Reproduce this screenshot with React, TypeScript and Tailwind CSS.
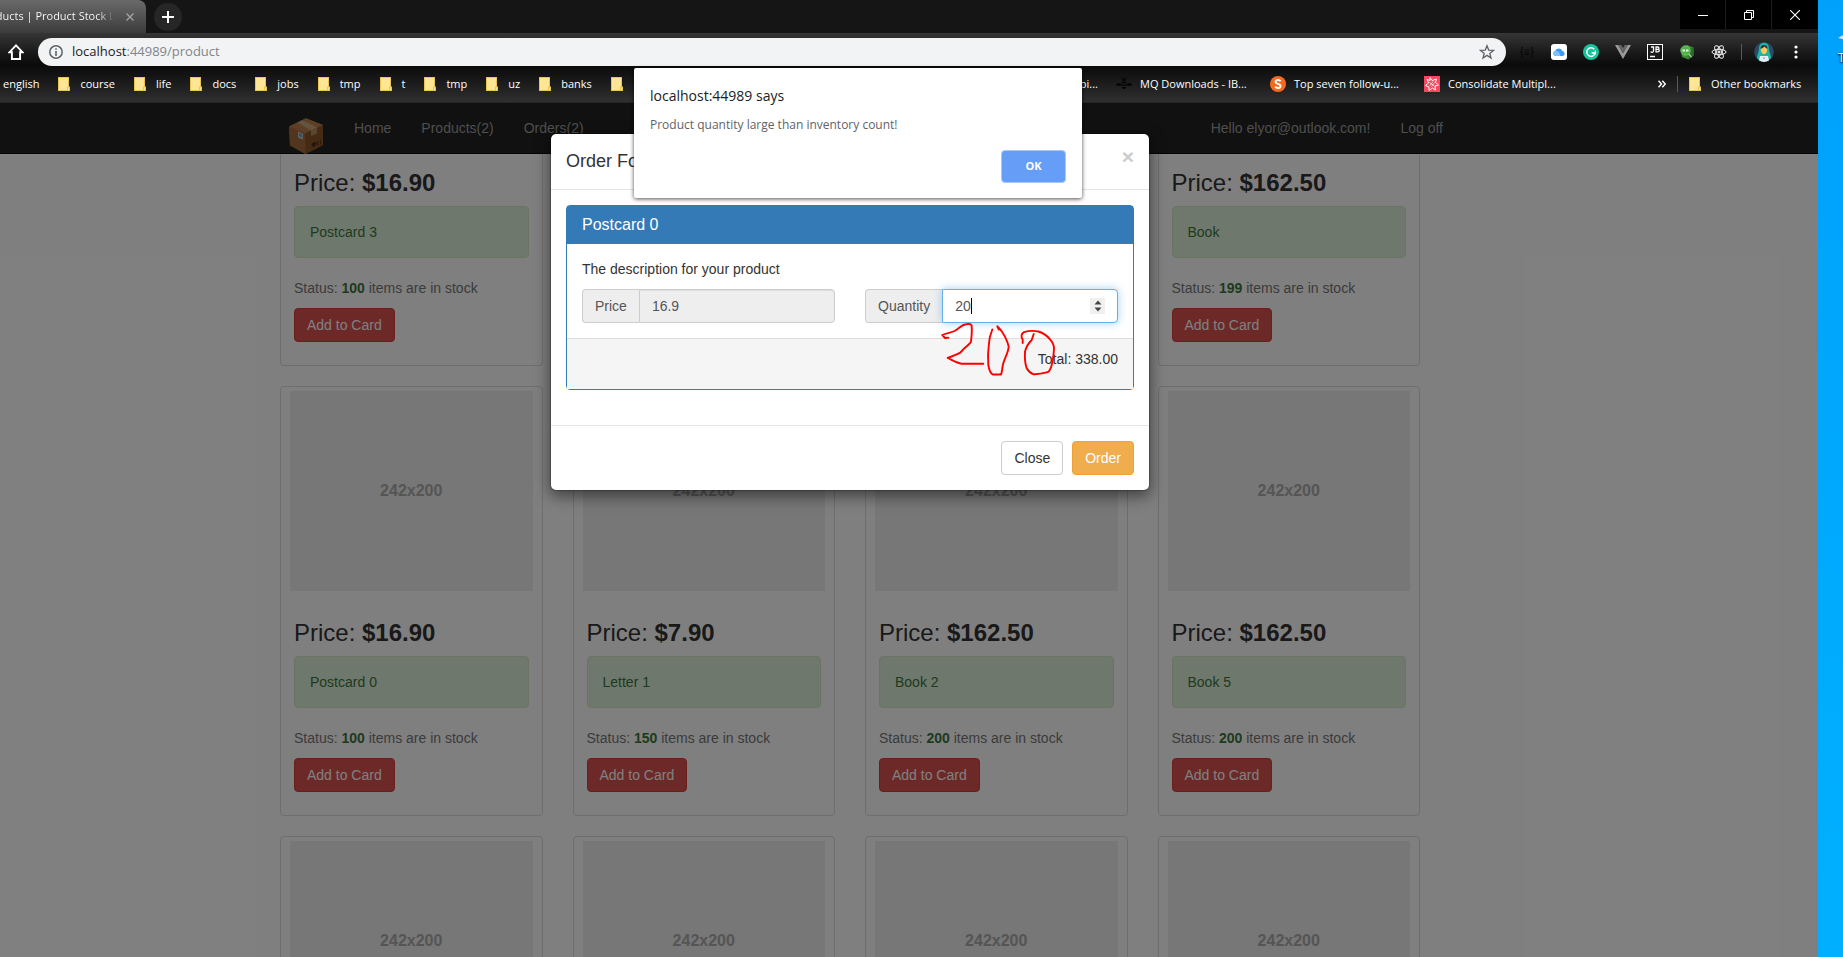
import type { ReactNode } from "react";

type Product = { price: string; name: string; stock: number };

const bookmarkFolders = ["course", "life", "docs", "jobs", "tmp", "t", "tmp", "uz", "banks"];

const products: Product[] = [
  { price: "$16.90", name: "Postcard 0", stock: 100 },
  { price: "$7.90", name: "Letter 1", stock: 150 },
  { price: "$162.50", name: "Book 2", stock: 200 },
  { price: "$162.50", name: "Book 5", stock: 200 },
];

function FolderIcon() {
  return (
    <svg width="12" height="14" viewBox="0 0 12 14" className="shrink-0" aria-hidden="true">
      <path d="M0 0h11v9.5h1V14H0z" fill="#e8c54f" />
      <path d="M1 1h9v8.500H9V13H1z" fill="#ffe695" />
      <path d="M10 10.500h1V13h-1z" fill="#ffe695" />
    </svg>
  );
}

function FolderBookmark({ children }: { children: ReactNode }) {
  return (
    <a href="#bookmark" className="flex shrink-0 items-center gap-[10px] whitespace-nowrap">
      <FolderIcon />
      {children}
    </a>
  );
}

function SiteBookmark({ icon, children }: { icon: ReactNode; children: ReactNode }) {
  return (
    <a href="#bookmark" className="flex shrink-0 items-center gap-2 whitespace-nowrap">
      {icon}
      <span className="w-28">{children}</span>
    </a>
  );
}

function BeeIcon() {
  return (
    <svg width="16" height="16" viewBox="0 0 16 16" aria-hidden="true" fill="#070707">
      <circle cx="8" cy="4" r="1.800" />
      <path d="M7 3 5 1.500M9 3l2-1.500" stroke="#070707" />
      <path d="M5.500 6h5v1.500h-5zM5 8.500h6V10H5zM5.500 11h5L9 13H7z" />
      <ellipse cx="2.600" cy="8.500" rx="2.600" ry="1.600" />
      <ellipse cx="13.400" cy="8.500" rx="2.600" ry="1.600" />
    </svg>
  );
}

function TopSevenIcon() {
  return (
    <svg width="16" height="16" viewBox="0 0 16 16" aria-hidden="true">
      <circle cx="8" cy="8" r="8" fill="#f96a1f" />
      <path
        d="M10.600 5.200C9.800 4.300 8.900 4 8 4 6.600 4 5.600 4.700 5.600 5.900c0 2.500 4.900 1.500 4.900 4.100 0 1.300-1.100 2-2.500 2-1.100 0-2.100-.4-2.800-1.300"
        fill="none"
        stroke="#fff"
        strokeWidth="2"
      />
    </svg>
  );
}

function StarBurstIcon() {
  return (
    <svg width="16" height="16" viewBox="0 0 16 16" aria-hidden="true">
      <rect width="16" height="16" fill="#f8485e" />
      <path
        d="M6 1.500 8 4.500l4.500-1.500L11.500 6.500l3 2.500-3.500 1 .5 4L8.500 12 5 14.500 5 11 1.500 9.500 4.500 7 3 3.500 6 4.500z"
        fill="none"
        stroke="#fff"
      />
      <path d="m6 9.500 3-4M7.500 10.500l3-4M5.500 6.500l5 3.500" stroke="#fff" strokeWidth=".7" />
    </svg>
  );
}

function HomeIcon() {
  return (
    <svg width="16" height="16" viewBox="0 0 16 16" aria-hidden="true">
      <path d="M8 1.400 1.600 8.200h2.300v6.800h8.200V8.200h2.300z" fill="none" stroke="#fff" strokeWidth="1.900" />
    </svg>
  );
}

function InfoIcon() {
  return (
    <svg width="14" height="14" viewBox="0 0 14 14" aria-hidden="true">
      <circle cx="7" cy="7" r="6.200" fill="none" stroke="#5f6368" strokeWidth="1.500" />
      <path d="M6.200 3.200h1.600v1.600H6.200zM6.200 6h1.600v5H6.200z" fill="#5f6368" />
    </svg>
  );
}

function StarIcon() {
  return (
    <svg width="16" height="16" viewBox="0 0 16 16" aria-hidden="true">
      <path
        d="m8 1.700 1.700 4.400 4.700.3-3.600 3 1.200 4.600L8 11.400 4 14l1.200-4.600-3.600-3 4.700-.3z"
        fill="none"
        stroke="#5f6368"
        strokeWidth="1.300"
      />
    </svg>
  );
}

function BracesIcon() {
  return (
    <svg width="16" height="16" viewBox="0 0 16 16" fill="none" stroke="#090909" strokeWidth="1.100" aria-hidden="true">
      <path d="M4 3.500H3v3.500L1.500 8.200 3 9.400v3.500h1M12 3.500h1v3.500l1.500 1.200L13 9.400v3.500h-1M5.500 6h5M5.500 8.200h5M5.500 10.400h5" />
    </svg>
  );
}

function CloudIcon() {
  return (
    <svg width="16" height="16" viewBox="0 0 16 16" aria-hidden="true">
      <rect width="16" height="16" rx="3" fill="#fff" />
      <path d="M4.500 12A2.500 2.500 0 0 1 4 7.100 4 4 0 0 1 11.400 7 2.600 2.600 0 0 1 12 12z" fill="#3f9bf7" />
      <path d="M4.500 12A2.500 2.500 0 0 1 4 7.100c2-.4 3.600.4 4.500 2.200.5 1.200.6 2 .5 2.700z" fill="#7cc4fb" />
    </svg>
  );
}

function GrammarIcon() {
  return (
    <svg width="16" height="16" viewBox="0 0 16 16" aria-hidden="true">
      <circle cx="8" cy="8" r="8" fill="#15c39a" />
      <path d="M11.300 5.200A4.300 4.300 0 1 0 12.300 9H8.600" fill="none" stroke="#fff" strokeWidth="1.500" />
      <path d="M12.300 6.500v2.700H9.800" fill="none" stroke="#fff" strokeWidth="1.200" />
    </svg>
  );
}

function VueIcon() {
  return (
    <svg width="16" height="16" viewBox="0 0 16 16" aria-hidden="true">
      <path d="M0 1h3.300L8 9.200 12.700 1H16L8 15z" fill="#9a9a9a" />
      <path d="M3.300 1h3L8 4l1.700-3h3L8 9.200z" fill="#666" />
    </svg>
  );
}

function BrainsIcon() {
  return (
    <svg width="16" height="16" viewBox="0 0 16 16" aria-hidden="true">
      <rect x=".5" y=".5" width="15" height="15" fill="#1b1b1b" stroke="#fff" />
      <path
        d="M4 3h2.500v3.800c0 1-.6 1.500-1.400 1.500-.6 0-1.100-.2-1.500-.7M9 2.500v5.800M8.500 3h2.300c1.500 0 1.500 2.300 0 2.300H9h2c1.700 0 1.700 2.500 0 2.500H8.500M3 12.500h5"
        fill="none"
        stroke="#fff"
        strokeWidth="1.300"
      />
    </svg>
  );
}

function HexIcon() {
  return (
    <svg width="16" height="16" viewBox="0 0 16 16" aria-hidden="true">
      <path d="M8 1 14.500 3.500v8L9.500 15.500 3 13 1.500 5z" fill="#3b8a34" />
      <path d="M10.500 4.500 14.500 3.500v8l-5 4z" fill="#2c6f2a" />
      <circle cx="6.500" cy="6.500" r="4.700" fill="#4fb548" stroke="#7cc675" strokeWidth=".8" />
      <path d="M3.500 6.500h2.500M7 6.500h2.500" stroke="#e3f7e0" strokeWidth="1.800" />
      <path d="m9.800 10 2.700 3.200" stroke="#c4c4c4" strokeWidth="1.200" />
    </svg>
  );
}

function AtomIcon() {
  return (
    <svg width="16" height="16" viewBox="0 0 16 16" fill="none" stroke="#f1f1f1" strokeWidth="1" aria-hidden="true">
      <ellipse cx="8" cy="8" rx="7" ry="2.700" />
      <ellipse cx="8" cy="8" rx="7" ry="2.700" transform="rotate(60 8 8)" />
      <ellipse cx="8" cy="8" rx="7" ry="2.700" transform="rotate(120 8 8)" />
      <circle cx="8" cy="8" r="1.100" fill="#f1f1f1" />
    </svg>
  );
}

function AvatarIcon() {
  return (
    <svg width="20" height="20" viewBox="0 0 20 20" aria-hidden="true">
      <circle cx="10" cy="10" r="9.800" fill="#2b4a63" />
      <path d="M10 .8c3.600 0 5 2.600 5 6.200 0 2.500 1.700 5 2 9-4 4.500-10.500 4.500-14 0 .3-4 2-6.500 2-9 0-3.600 1.400-6.200 5-6.200z" fill="#1fb5a4" />
      <path d="M10 3.500c2.300 0 3.200 1.600 3.200 4 0 2.700-1.300 4.700-3.200 4.700s-3.200-2-3.200-4.700c0-2.400.9-4 3.200-4z" fill="#fdc75b" />
      <path d="M6.600 7c0-3 1-4 3.400-4s3.400 1 3.400 4C12 6.200 11 5.300 10.500 4.500 9.500 5.800 8 6.500 6.600 7z" fill="#26323c" />
      <path d="M6 14h8l1 4.500a10 10 0 0 1-10 0z" fill="#e6eef2" />
      <circle cx="10" cy="16.300" r="1" fill="#9db3bf" />
    </svg>
  );
}

function BoxIcon() {
  return (
    <svg width="34" height="36" viewBox="0 0 34 36" aria-hidden="true">
      <path d="M0 8.500 17 .3 34 7v20L16.500 36 1 27.500z" fill="#a86d3c" />
      <path d="M0 8.500 17 .3 34 7 16 15.500z" fill="#b97f4c" />
      <path d="M0 8.500 16 15.500 16.500 36 1 27.500z" fill="#a56a3a" />
      <path d="M16 15.500 34 7v20l-17.500 9z" fill="#8a5429" />
      <path d="m8.500 4.600 5-2.400L28 9.500l-6 3z" fill="#c9a67f" />
      <path d="m22 12.500 6-3v6l-6 2.500z" fill="#b38c63" />
      <path d="m9 13.500 5 2.200v6L9 19.500z" fill="#b7c4ca" />
      <path d="m10 15 3 1.300v3L10 18z" fill="#7f9bad" />
      <path d="m23 25.500 4-1.500v2l-2 3-2-1.500zM29 22.500v5M31.500 21.500v5" fill="#4d2d12" stroke="#4d2d12" strokeWidth=".8" />
    </svg>
  );
}

function BrowserChrome() {
  return (
    <header className="shrink-0 font-['Open_Sans',sans-serif] text-[11px] text-white">
      <div className="flex h-[33px] bg-[#151515]">
        <div className="flex w-[248px] items-center gap-3 rounded-tr-lg bg-linear-to-b from-[#6a6a6a] to-[#3c3c3c] pl-20">
          <span className="w-[136px] overflow-hidden bg-linear-to-r from-white from-88% to-transparent bg-clip-text whitespace-nowrap text-transparent">
            Products | Product Stock List
          </span>
          <button type="button" aria-label="Close tab" className="text-[#a5a5a5]">
            <svg width="8" height="8" viewBox="0 0 8 8" aria-hidden="true">
              <path d="m.5.5 7 7m0-7-7 7" stroke="currentColor" strokeWidth="1.300" />
            </svg>
          </button>
        </div>
        <button
          type="button"
          aria-label="New tab"
          className="mt-[3px] ml-2 flex size-7 items-center justify-center rounded-full bg-[#262626]"
        >
          <svg width="12" height="12" viewBox="0 0 12 12" aria-hidden="true">
            <path d="M6 0v12M0 6h12" stroke="#fff" strokeWidth="2" />
          </svg>
        </button>
        <div className="ml-auto flex h-[29px] divide-x divide-[#1c1c1c] bg-black">
          <button type="button" aria-label="Minimize" className="flex w-[46px] items-center justify-center">
            <svg width="10" height="10" viewBox="0 0 10 10" aria-hidden="true">
              <path d="M0 5.500h10" stroke="#fff" />
            </svg>
          </button>
          <button type="button" aria-label="Restore" className="flex w-[46px] items-center justify-center">
            <svg width="10" height="10" viewBox="0 0 10 10" fill="none" stroke="#fff" aria-hidden="true">
              <path d="M.5 2.500h7v7h-7zM2.500 2.500v-2h7v7h-2" />
            </svg>
          </button>
          <button type="button" aria-label="Close" className="flex w-[46px] items-center justify-center">
            <svg width="10" height="10" viewBox="0 0 10 10" aria-hidden="true">
              <path d="m0 0 10 10M10 0 0 10" stroke="#fff" strokeWidth="1.100" />
            </svg>
          </button>
        </div>
      </div>

      <div className="flex h-[33px] items-center bg-linear-to-b from-[#363636] to-[#090909] pt-[5px] pl-[110px]">
        <button type="button" aria-label="Home page">
          <HomeIcon />
        </button>
        <div className="ml-[14px] flex h-7 flex-1 items-center rounded-full bg-[#f1f3f4] px-[11px]">
          <InfoIcon />
          <span className="flex-1 pl-[9px] text-[13px] text-[#80868b]">
            <span className="text-[#202124]">localhost</span>:44989/product
          </span>
          <button type="button" aria-label="Bookmark this page">
            <StarIcon />
          </button>
        </div>
        <div className="flex items-center gap-4 pl-[13px]">
          <BracesIcon />
          <CloudIcon />
          <GrammarIcon />
          <VueIcon />
          <BrainsIcon />
          <HexIcon />
          <AtomIcon />
        </div>
        <span className="ml-[14px] h-4 w-px bg-[#5a5a5a]" />
        <div className="ml-3">
          <AvatarIcon />
        </div>
        <button type="button" aria-label="Menu" className="px-5">
          <svg width="4" height="14" viewBox="0 0 4 14" fill="#fff" aria-hidden="true">
            <circle cx="2" cy="2" r="1.600" />
            <circle cx="2" cy="7" r="1.600" />
            <circle cx="2" cy="12" r="1.600" />
          </svg>
        </button>
      </div>

      <nav className="flex h-[37px] items-center gap-[11px] border-b border-[#252525] bg-linear-to-b from-[#0b0b0b] to-[#303030] pr-3 pl-[105px]">
        <div className="flex items-center gap-[19px]">
          <a href="#bookmark">english</a>
          {bookmarkFolders.map((name, i) => (
            <FolderBookmark key={i}>{name}</FolderBookmark>
          ))}
          <FolderIcon />
        </div>
        <div className="ml-auto flex items-center gap-[18px]">
          <a href="#bookmark">Mobi...</a>
          <SiteBookmark icon={<BeeIcon />}>MQ Downloads - IB...</SiteBookmark>
          <SiteBookmark icon={<TopSevenIcon />}>Top seven follow-u...</SiteBookmark>
          <SiteBookmark icon={<StarBurstIcon />}>Consolidate Multipl...</SiteBookmark>
        </div>
        <button type="button" aria-label="More bookmarks" className="ml-[87px]">
          <svg width="8" height="8" viewBox="0 0 8 8" fill="none" stroke="#fff" strokeWidth="1.500" aria-hidden="true">
            <path d="m.5.8 3 3.200-3 3.200M4.300.8l3 3.200-3 3.200" />
          </svg>
        </button>
        <div className="flex w-[129px] items-center gap-[11px]">
          <span className="h-4 w-px bg-[#5a5a5a]" />
          <FolderBookmark>Other bookmarks</FolderBookmark>
        </div>
      </nav>
    </header>
  );
}

function Placeholder() {
  return (
    <div className="mx-[9px] mt-1 flex h-[200px] items-center justify-center bg-[#eee] text-base font-bold text-[#aaa]">
      242x200
    </div>
  );
}

function Caption({ price, name, stock }: Product) {
  return (
    <div className="px-[13px] pb-[23px]">
      <h3 className="mb-[10px] text-2xl leading-[26px]">
        Price: <b>{price}</b>
      </h3>
      <div className="mb-5 rounded-sm border border-[#d6e9c6] bg-[#dff0d8] p-[15px] text-[#3c763d]">{name}</div>
      <p className="mb-[10px] text-[#777]">
        Status: <b className="text-[#3c763d]">{stock}</b> items are in stock
      </p>
      <button type="button" className="rounded-sm border border-[#d43f3a] bg-[#d9534f] px-3 py-[6px] text-white">
        Add to Card
      </button>
    </div>
  );
}

function Page() {
  return (
    <>
      <nav className="h-[51px] shrink-0 border-b border-[#080808] bg-[#222] text-[#9d9d9d]">
        <div className="mx-auto flex w-[1138px] items-start pt-[15px]">
          <a href="#brand" aria-label="Product Stock" className="h-9 shrink-0">
            <BoxIcon />
          </a>
          <div className="flex pl-4">
            <a href="#home" className="px-[15px]">Home</a>
            <a href="#products" className="px-[15px]">Products(2)</a>
            <a href="#orders" className="px-[15px]">Orders(2)</a>
          </div>
          <div className="-mr-[31px] ml-auto flex">
            <a href="#account" className="px-[15px]">Hello elyor@outlook.com!</a>
            <a href="#logoff" className="px-[15px]">Log off</a>
          </div>
        </div>
      </nav>
      <main className="pr-4">
        <div className="mx-auto grid w-[1140px] grid-cols-4 gap-x-[30px] gap-y-5">
          <article className="rounded-b-sm border border-t-0 border-[#ddd] pt-4">
            <Caption price="$16.90" name="Postcard 3" stock={100} />
          </article>
          <article className="col-start-4 rounded-b-sm border border-t-0 border-[#ddd] pt-4">
            <Caption price="$162.50" name="Book" stock={199} />
          </article>
          {products.map((product) => (
            <article key={product.name} className="rounded-sm border border-[#ddd]">
              <Placeholder />
              <div className="pt-[29px]">
                <Caption {...product} />
              </div>
            </article>
          ))}
          {products.map((product) => (
            <article key={product.name} className="rounded-sm border border-[#ddd]">
              <Placeholder />
            </article>
          ))}
        </div>
      </main>
    </>
  );
}

function OrderModal() {
  return (
    <section
      role="dialog"
      aria-label="Order Form"
      className="w-[600px] rounded-md border border-black/20 bg-white bg-clip-padding shadow-[0_5px_15px_rgba(0,0,0,0.5)]"
    >
      <header className="flex items-start justify-between border-b border-[#e5e5e5] p-[15px]">
        <h4 className="text-lg leading-[25px]">Order Form</h4>
        <button type="button" aria-label="Close dialog" className="text-[21px] leading-4 font-bold text-[#ccc]">
          ×
        </button>
      </header>
      <div className="p-[15px]">
        <div className="mb-5 rounded-sm border border-[#337ab7]">
          <h3 className="bg-[#337ab7] px-[15px] py-[10px] text-base leading-[18px] text-white">Postcard 0</h3>
          <div className="p-[15px]">
            <p className="mb-[10px]">The description for your product</p>
            <div className="grid grid-cols-2 gap-[30px] text-[#555]">
              <div className="flex h-[34px]">
                <label htmlFor="price" className="rounded-l-sm border border-r-0 border-[#ccc] bg-[#eee] px-3 py-[6px]">
                  Price
                </label>
                <input
                  id="price"
                  readOnly
                  value="16.9"
                  className="w-0 flex-1 rounded-r-sm border border-[#ccc] bg-[#eee] px-3 shadow-[inset_0_1px_1px_rgba(0,0,0,0.075)]"
                />
              </div>
              <div className="relative flex h-[34px]">
                <label htmlFor="quantity" className="rounded-l-sm border border-r-0 border-[#ccc] bg-[#eee] px-3 py-[6px]">
                  Quantity
                </label>
                <div className="flex flex-1 items-center rounded-r-sm border border-[#66afe9] bg-white px-3 shadow-[0_0_8px_rgba(102,175,233,0.6)]">
                  <input id="quantity" inputMode="numeric" defaultValue="20" className="w-4 outline-none" />
                  <span className="h-4 w-px bg-black" />
                  <span className="ml-auto flex h-4 w-[15px] items-center justify-center bg-[#f0f0f0]">
                    <svg width="8" height="12" viewBox="0 0 8 12" fill="#444" aria-hidden="true">
                      <path d="M4 .500 7.500 4.500h-7zM4 11.500.5 7.500h7z" />
                    </svg>
                  </span>
                </div>
                <svg
                  width="116"
                  height="54"
                  viewBox="0 0 116 54"
                  fill="none"
                  stroke="#f00"
                  strokeWidth="1.900"
                  strokeLinecap="round"
                  strokeLinejoin="round"
                  className="absolute top-[34px] left-[76px]"
                  aria-hidden="true"
                >
                  <path d="M7.300 14.700 4 15 1.300 12C6 10 11 9.500 14 7.700 19 4.500 21 1.500 25 1.200c2-.2 4.500-.5 5.500.8.8 5 .3 10-.5 16.700-2 3.500-5 4.500-7.700 7.600-2 3-4 4.500-6.600 5L6.700 35c4.500 2 9 5 14 5.700h21.600" />
                  <path d="M51.300 6.500C49.500 11 48.300 15 48 20.300c-1 7-1.200 15-.7 21.700.7 4 1.700 8 4.400 9.500H60c1.300-2.500 1-7 2.300-11.200 2-6.500 5-11 5.400-16.600-.7-4-2-6.500-3.700-10-2-4-4-7-7.700-10.400l1.500 3.200" />
                  <path d="M81.700 20v-3.500C80 14 79.800 11 83 9.200 88 7.500 93 7.700 97.300 8.500c5 1.500 8.700 4 11.700 7.800 2.500 2.700 4 5.500 4 9-.3 6.500-.8 11.500-2.300 16.700-1 4-2 6-4 7.200-4.700 1.300-10 2.300-14.400 2-3-1-5-3-6.600-5.900-2-5.500-2-11-1.700-16.600 1-4.700 3.500-8.500 6.700-11.700L92.700 11" />
                </svg>
              </div>
            </div>
          </div>
          <div className="border-t border-[#ddd] bg-[#f5f5f5] px-[15px] pt-[10px] pb-5 text-right">Total: 338.00</div>
        </div>
      </div>
      <footer className="flex justify-end gap-[9px] border-t border-[#e5e5e5] p-[15px]">
        <button type="button" className="rounded-sm border border-[#ccc] bg-white px-3 py-[6px]">
          Close
        </button>
        <button type="button" className="rounded-sm border border-[#eea236] bg-[#f0ad4e] px-3 py-[6px] text-white">
          Order
        </button>
      </footer>
    </section>
  );
}

function AlertDialog() {
  return (
    <section
      role="alertdialog"
      aria-label="localhost:44989 says"
      className="w-[448px] rounded-xs bg-white px-4 pt-[18px] pb-[15px] font-['Open_Sans',sans-serif] shadow-[0_1px_4px_rgba(0,0,0,0.7)]"
    >
      <h2 className="text-sm leading-5 text-[#202124]">localhost:44989 says</h2>
      <p className="mt-[9px] text-xs leading-5 text-[#5f6368]">Product quantity large than inventory count!</p>
      <div className="mt-[15px] flex justify-end">
        <button
          type="button"
          className="h-[33px] w-[65px] rounded-sm border border-[#a6c8fc] bg-[#669df6] text-[11px] font-bold text-white"
        >
          OK
        </button>
      </div>
    </section>
  );
}

export default function App() {
  return (
    <div className="flex h-screen overflow-hidden bg-linear-to-b from-[#00a1fb] to-[#00b0ff]">
      <div className="relative -ml-[102px] flex flex-1 flex-col bg-white">
        <BrowserChrome />
        <div className="relative flex min-h-0 flex-1 flex-col overflow-hidden font-['Liberation_Sans',Arial,sans-serif] text-sm leading-5 text-[#333]">
          <Page />
          <div className="absolute inset-0 flex items-start justify-center bg-black/50 pt-[30px] pr-4">
            <OrderModal />
          </div>
        </div>
        <div className="absolute inset-x-0 top-[68px] flex justify-center">
          <AlertDialog />
        </div>
      </div>
      <aside className="w-[25px] shrink-0 overflow-hidden pt-8 pl-5 font-['Open_Sans',sans-serif] text-xs text-white">
        <svg width="12" height="12" viewBox="0 0 12 12" aria-hidden="true">
          <path d="M0 6 6 2.500v5z" fill="#d8dde0" />
        </svg>
        <span className="mt-1 block leading-5 text-shadow-[1px_1px_2px_#000,0_1px_2px_#000]">T</span>
      </aside>
    </div>
  );
}
